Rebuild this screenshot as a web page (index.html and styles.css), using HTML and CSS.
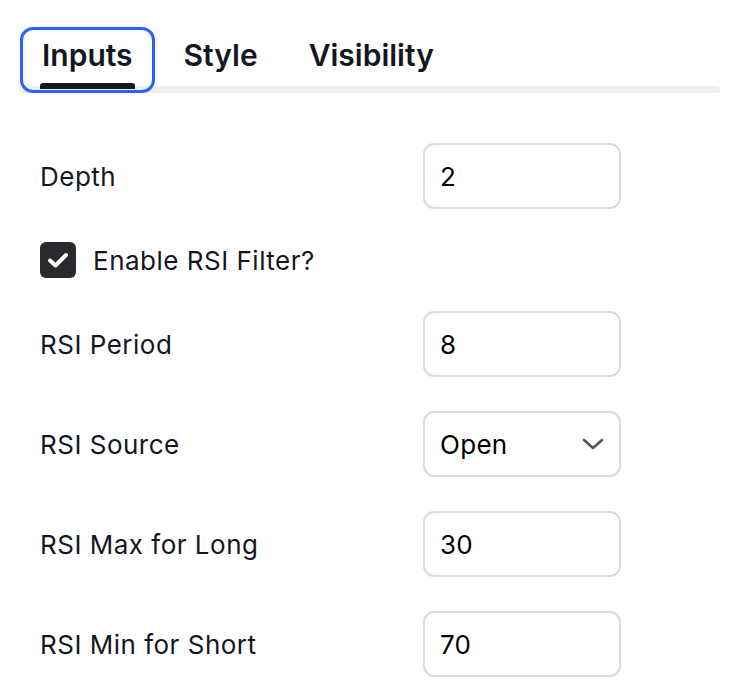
FILE: index.html
```html
<!DOCTYPE html>
<html lang="en">
<head>
  <meta charset="UTF-8">
  <meta name="viewport" content="width=device-width, initial-scale=1.0">
  <title>Indicator settings</title>
  <link rel="stylesheet" href="styles.css">
</head>
<body>
  <div class="tabs">
    <div class="tab active">Inputs</div>
    <div class="tab">Style</div>
    <div class="tab">Visibility</div>
  </div>

  <div class="form">
    <div class="row">
      <div class="label">Depth</div>
      <div class="field">2</div>
    </div>

    <div class="row check-row">
      <span class="checkbox">
        <svg width="36" height="36" viewBox="0 0 36 36"><path d="M10 18.5l5.5 5L26 13" fill="none" stroke="#fff" stroke-width="4" stroke-linecap="round" stroke-linejoin="round"/></svg>
      </span>
      <span class="check-label">Enable RSI Filter?</span>
    </div>

    <div class="row">
      <div class="label">RSI Period</div>
      <div class="field">8</div>
    </div>

    <div class="row">
      <div class="label">RSI Source</div>
      <div class="field select">
        <span>Open</span>
        <svg width="22" height="12" viewBox="0 0 22 12"><path d="M2 2l9 8 9-8" fill="none" stroke="#555" stroke-width="2.6" stroke-linecap="round" stroke-linejoin="round"/></svg>
      </div>
    </div>

    <div class="row">
      <div class="label">RSI Max for Long</div>
      <div class="field">30</div>
    </div>

    <div class="row">
      <div class="label">RSI Min for Short</div>
      <div class="field">70</div>
    </div>
  </div>
</body>
</html>
```

FILE: styles.css
```css
/* GENERAL */
body {
  margin: 0;
  padding: 27px 20px 0 20px;
  background: #fff;
  font-family: 'Inter', 'Noto Sans', sans-serif;
  color: #131722;
}

/* TABS */
.tabs {
  display: flex;
  gap: 7px;
  position: relative;
}

.tabs::after {
  content: '';
  position: absolute;
  left: 0;
  right: 0;
  bottom: 0;
  height: 7px;
  border-radius: 4px;
  background-color: #f0f0f0;
}

.tab {
  position: relative;
  height: 66px;
  box-sizing: border-box;
  padding: 3px 19px 0 19px;
  font-size: 30px;
  font-weight: 600;
  line-height: 44px;
  border: 3px solid transparent;
  border-radius: 13px;
  z-index: 1;
}

.tab.active {
  border-color: #2962ff;
}

.tab.active::after {
  content: '';
  position: absolute;
  left: 17px;
  right: 17px;
  bottom: 1px;
  height: 6px;
  border-radius: 3px 3px 0 0;
  background-color: #131722;
}

/* FORM */
.form {
  margin-top: 50px;
  padding-left: 20px;
  display: flex;
  flex-direction: column;
  gap: 34px;
}

.row {
  display: flex;
  align-items: center;
  height: 66px;
}

.label {
  width: 383px;
  font-size: 26px;
  letter-spacing: 0.5px;
}

.field {
  width: 198px;
  height: 66px;
  box-sizing: border-box;
  border: 2px solid #dadada;
  border-radius: 11px;
  padding: 0 15px;
  display: flex;
  align-items: center;
  font-size: 26px;
  letter-spacing: 0.3px;
  color: #000;
}

.select {
  justify-content: space-between;
}

.check-row {
  height: 34px;
}

.checkbox {
  width: 36px;
  height: 36px;
  border-radius: 6px;
  background-color: #2a2a2e;
  display: flex;
}

.check-label {
  margin-left: 17px;
  font-size: 26px;
  letter-spacing: 0.5px;
}
```
